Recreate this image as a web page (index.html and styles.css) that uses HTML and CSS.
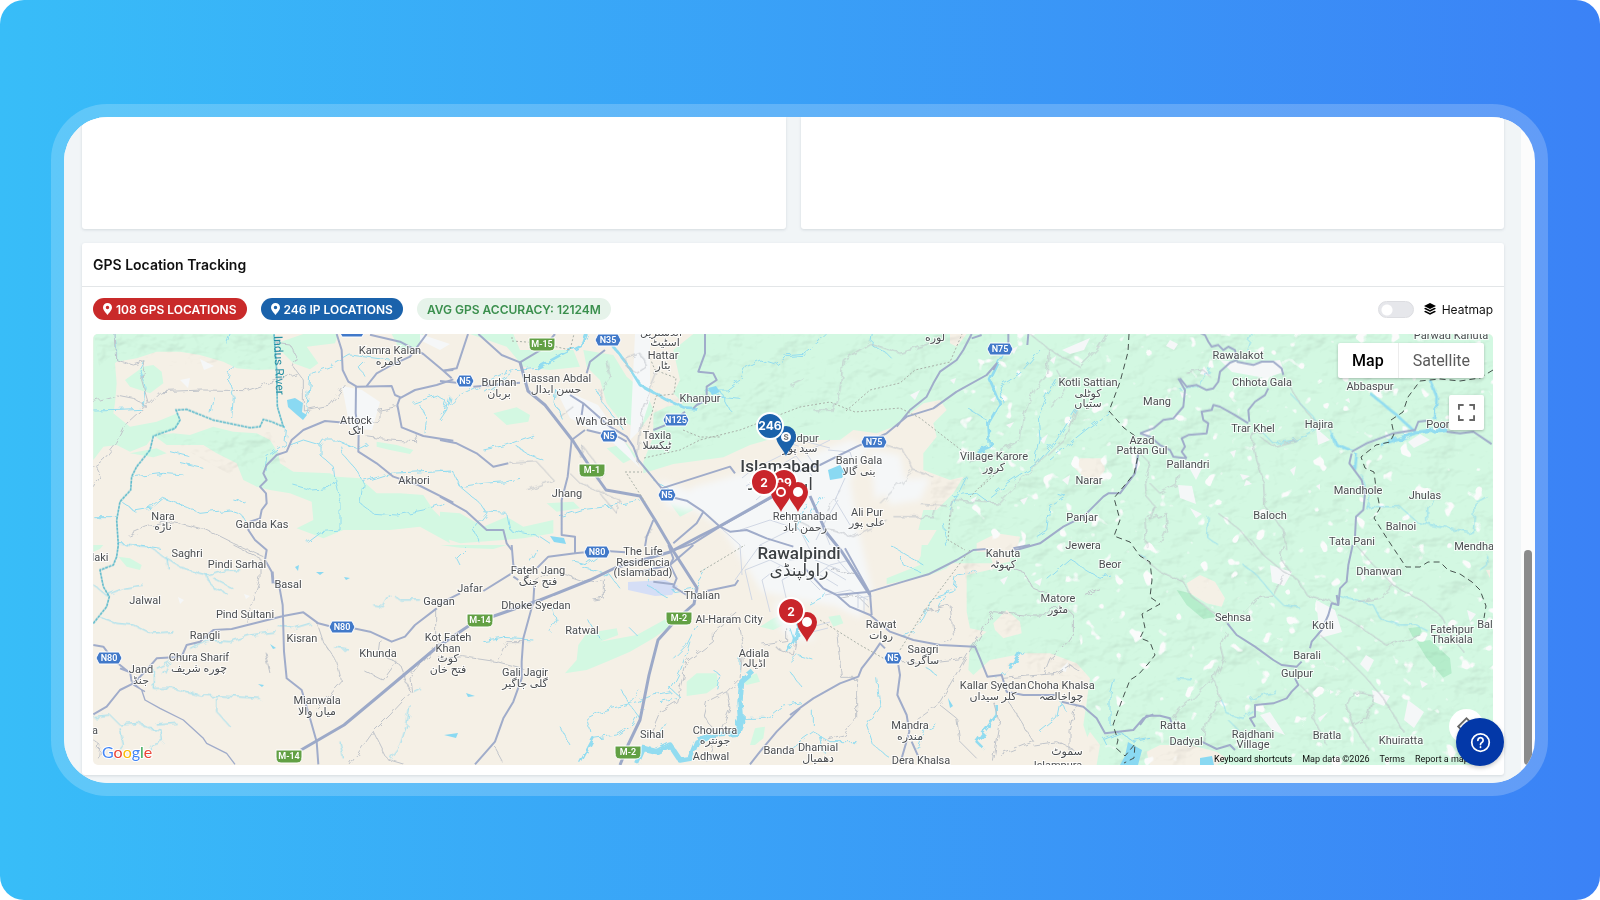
FILE: index.html
```html
<!DOCTYPE html>
<html lang="en">
<head>
    <meta charset="UTF-8">
    <meta name="viewport" content="width=device-width, initial-scale=1.0">
    <title>GPS Location Tracking</title>
    <link rel="stylesheet" href="styles.css">
</head>
<body>
    <div class="backdrop">
    <div class="frame">
    <div class="window">
        <main class="page">
            <div class="row">
                <div class="card"></div>
                <div class="card"></div>
            </div>
            <section class="card tracking">
                <h2>GPS Location Tracking</h2>
                <div class="toolbar">
                    <span class="badge red"><svg class="pinIcon" viewBox="0 0 12 16"><path d="M6 0a6 6 0 0 0-6 6c0 4 4 7 6 10 2-3 6-6 6-10a6 6 0 0 0-6-6zm0 8.300a2.300 2.300 0 1 1 0-4.600 2.300 2.300 0 0 1 0 4.600z"/></svg>108 GPS LOCATIONS</span>
                    <span class="badge blue"><svg class="pinIcon" viewBox="0 0 12 16"><path d="M6 0a6 6 0 0 0-6 6c0 4 4 7 6 10 2-3 6-6 6-10a6 6 0 0 0-6-6zm0 8.300a2.300 2.300 0 1 1 0-4.600 2.300 2.300 0 0 1 0 4.600z"/></svg>246 IP LOCATIONS</span>
                    <span class="badge green">AVG GPS ACCURACY: 12124M</span>
                    <label class="heatmap">
                        <input type="checkbox" class="switch">
                        <svg class="layers" viewBox="0 0 24 24"><path d="M12 0 0 6l12 6 12-6z"/><path d="M3 9.500 0 11.500l12 6 12-6-3-2-9 4.500z"/><path d="M3 15.500 0 17.500l12 6 12-6-3-2-9 4.500z"/></svg>
                        Heatmap
                    </label>
                </div>
                <div class="map">
                    <svg class="mapArt" viewBox="93 334 1400 431">
                        <defs>
                            <filter id="relief" x="0" y="0" width="100%" height="100%">
                                <feTurbulence type="fractalNoise" baseFrequency="0.025 0.035" numOctaves="4" seed="8"/>
                                <feDiffuseLighting surfaceScale="9" diffuseConstant="1.2" lighting-color="#ffffff" result="light">
                                    <feDistantLight azimuth="225" elevation="60"/>
                                </feDiffuseLighting>
                                <feComposite in="light" in2="SourceAlpha" operator="in"/>
                            </filter>
                            <filter id="specks" x="0" y="0" width="100%" height="100%">
                                <feTurbulence type="fractalNoise" baseFrequency="0.07" numOctaves="2" seed="12"/>
                                <feColorMatrix values="0 0 0 0 0.96  0 0 0 0 0.97  0 0 0 0 0.97  14 0 0 0 -9.500" result="dots"/>
                                <feComposite in="dots" in2="SourceAlpha" operator="in"/>
                            </filter>
                            <filter id="wiggle" x="-5%" y="-5%" width="110%" height="110%">
                                <feTurbulence type="fractalNoise" baseFrequency="0.12" numOctaves="2" seed="3"/>
                                <feDisplacementMap in="SourceGraphic" scale="7"/>
                            </filter>
                            <filter id="soft">
                                <feGaussianBlur stdDeviation="3"/>
                            </filter>
                            <g id="nShield"><path d="M-10-6H10L13 0 10 6H-10L-13 0z"/></g>
                            <g id="nShieldSmall"><path d="M-6-6H6L9 0 6 6H-6L-9 0z"/></g>
                            <g id="mShield"><path d="M-13-6H13V1Q13 7 8 7H-8Q-13 7-13 1z"/></g>
                            <path id="pin" d="M0 0C-2-6-10-12-10-20A10 10 0 0 1 10-20C10-12 2-6 0 0z"/>
                        </defs>

                        <!-- ground -->
                        <rect class="land" x="93" y="334" width="1400" height="431"/>
                        <g class="forest">
                            <svg class="tile" x="90" y="330" width="360" height="220" viewBox="0 0 1080 660">
                                <path d="M10 12H555L560 118 500 120 440 115 400 95 330 75 270 65 200 65 140 85 80 95 75 100 80 160 75 220 70 250 120 290 200 275 262 250 270 280 250 300 190 318 170 345 120 365 80 345 40 350 10 390z"/>
                                <path d="M105 150 160 110 190 105 215 125 220 160 180 190 120 170z"/>
                                <path d="M190 315 250 310 300 315 370 290 430 305 500 310 540 330 565 370 570 400 610 425 720 430 740 440 810 445 860 490 930 490 1000 495 1030 540 1060 570 1080 640 990 590 900 600 760 600 700 625 620 595 670 570 665 515 600 490 540 480 500 470 460 450 440 400 380 370 340 345 230 345z"/>
                                <path d="M560 40 640 12H745L735 40 650 50 685 100 660 118 610 100 570 60zM860 335 920 345 970 360 960 372 900 360 860 350zM905 12H1000L985 50 930 60zM120 370 200 355 230 370 190 382z"/>
                            </svg>
                            <svg class="tile" x="440" y="330" width="360" height="220" viewBox="0 0 1080 660">
                                <path d="M90 12H220L240 60 400 60 420 110 330 120 250 110 200 50zM160 250 230 232 270 255 265 275 200 285zM430 60 520 75 560 140 620 190 640 240 600 300 540 270 500 220 480 150 440 110zM0 545 60 550 130 590 200 560 250 590 340 570 340 610 250 625 60 640 0 620zM320 520 400 515 420 535 350 545z"/>
                                <path d="M610 430 610 395 640 320 640 250 680 230 730 220 700 190 720 150 700 60 760 12H1090V300L1000 325 930 345 850 382 700 402z"/>
                                <path d="M690 520 740 510 760 540 720 560zM500 355 560 340 590 380 550 400z"/>
                            </svg>
                            <svg class="tile" x="790" y="330" width="360" height="220" viewBox="0 0 1080 660">
                                <path d="M-20 12H1090V700H380L440 600 385 600 400 540 440 540 490 490 520 440 480 450 400 420 400 370 440 320 430 280 470 240 450 210 400 220 310 290 260 310 190 300 150 330-20 330z"/>
                                <path d="M30 450 90 440 110 480 70 500zM110 470 150 480 160 530 120 540z"/>
                            </svg>
                            <path d="M1130 334H1493V765H1130z"/>
                            <svg class="tile" x="90" y="545" width="360" height="225" viewBox="0 0 1080 675">
                                <path d="M85 35 120 40 155 60 150 75 110 65zM10 0H40L30 12 10 20z"/>
                            </svg>
                            <svg class="tile" x="440" y="545" width="360" height="225" viewBox="0 0 1080 675">
                                <path d="M0 0H200L160 12 60 8zM375 385 410 345 415 300 440 265 530 250 535 270 480 290 590 270 690 215 710 230 640 280 570 320 500 350 440 375zM740 410 770 385 830 385 835 420 800 445 740 453zM960 245 1000 220 1040 205 1050 230 1000 255zM930 600 945 550 975 545 970 580 945 600zM900 405 950 385 960 410 920 420z"/>
                            </svg>
                            <svg class="tile" x="790" y="545" width="360" height="225" viewBox="0 0 1080 675">
                                <path d="M395 0H560L520 20 470 70 420 90 290 118 290 100 390 60zM1060 0H620V70L530 90 530 200 540 250 590 260 540 300 535 375 550 390 600 345 700 325 780 325 860 355 900 400 890 470 880 540 900 600 880 660H1080zM115 215 150 210 160 235 130 245z"/>
                            </svg>
                        </g>
                        <g class="land">
                            <svg class="tile" x="790" y="330" width="360" height="220" viewBox="0 0 1080 660">
                                <path d="M850 410 870 385 940 385 945 420 920 460 880 440zM480 12H530L500 50 480 40zM560 640 620 610 690 620 680 665 560 665z"/>
                            </svg>
                            <svg class="tile" x="790" y="545" width="360" height="225" viewBox="0 0 1080 675">
                                <path d="M610 235 650 195 690 230 695 265 640 280 615 255zM590 0H670L660 50 610 60zM880 600 900 560 930 600 920 660H880z"/>
                            </svg>
                            <svg class="tile" x="1140" y="545" width="410" height="255" viewBox="0 0 1230 765">
                                <path d="M140 115 180 90 225 110 255 160 245 185 200 175 150 145zM20 620 60 600 150 600 230 620 260 640 230 660H30zM1038 75H1050V100z"/>
                            </svg>
                        </g>
                        <g class="park">
                            <svg class="tile" x="1140" y="545" width="410" height="255" viewBox="0 0 1230 765">
                                <path d="M110 135 150 145 200 190 230 215 190 222 140 180zM830 290 870 285 930 340 935 385 910 398 860 340zM805 250 840 245 850 275 820 280z"/>
                            </svg>
                        </g>
                        <g class="relief" filter="url(#relief)">
                            <path d="M94 334H280L270 372 220 362 140 368 100 372zM150 430 270 432 290 470 240 480z"/>
                            <path d="M645 460 655 410 720 334H1493V765H1090L1086 680 970 660 965 570 930 510 935 390 890 400 850 420 780 430z"/>
                        </g>
                        <path filter="url(#specks)" d="M960 334H1493V765H1100L1080 640 970 560 950 480z"/>
                        <g class="city" filter="url(#soft)">
                            <path d="M690 488 740 474 790 462 850 440 868 448 850 480 856 520 872 590 860 618 835 606 800 600 762 592 742 560 722 528 694 510z"/>
                            <path d="M776 600 800 610 815 640 790 640 775 620zM660 480 700 495 690 512 665 505zM880 480 930 478 920 500 890 505zM870 450 900 455 905 480 875 500z"/>
                        </g>
                        <g class="city">
                            <path d="M555 388 575 395 598 405 630 450 640 468 610 440 570 418zM635 334H650V400L640 430 630 440zM342 386 362 390 380 402 372 430 350 428zM420 334 450 344 440 350 420 340z"/>
                            <path d="M1220 360 1250 364 1280 360 1284 372 1265 378 1232 372zM1185 460 1202 468 1196 480zM1316 428 1330 440 1318 445zM1316 600 1335 610 1342 632 1320 638zM1270 565 1292 572 1284 586 1272 582zM1260 715 1270 712 1285 735 1272 730z"/>
                            <path d="M1178 485 1192 486 1196 504 1180 498zM1190 508 1202 514 1196 518zM1366 655 1374 660 1368 672 1360 664zM1372 690 1390 696 1384 706 1374 702zM1408 700 1424 712 1414 728 1404 720zM1467 610 1476 614 1470 622zM1420 434 1430 440 1414 448 1408 442zM1290 470 1296 466 1294 476z"/>
                            <path d="M1170 340 1178 344 1174 350 1166 346zM1204 366 1210 376 1200 374zM1180 392 1188 394 1182 398zM1230 452 1236 450 1234 458zM1246 480 1252 484 1244 486zM1316 486 1320 484 1320 490zM1156 448 1160 446 1160 452zM1345 400 1349 398 1350 403zM1240 474 1250 476 1243 480zM1318 718 1328 712 1320 722zM1390 570 1397 576 1390 578zM1360 572 1366 578 1362 582zM1420 680 1428 684 1422 688zM1452 724 1460 728 1455 736zM1330 690 1334 692 1330 694z"/>
                            <path d="M1010 350 1018 346 1014 354zM1050 360 1056 356 1054 364zM990 400 996 396 994 402zM1006 425 1014 422 1010 428zM950 380 956 378 954 384zM910 395 920 390 915 400zM1040 440 1048 434 1044 444zM970 500 977 496 974 503zM1020 500 1028 497 1024 505zM1062 350 1090 338 1084 350 1070 354zM1062 480 1070 475 1068 485zM1000 580 1008 576 1004 585zM1034 582 1042 578 1040 586zM1060 670 1068 662 1066 672zM200 359 214 366 204 370zM180 380 190 378 188 388zM178 597 184 600 180 604zM244 594 250 596 246 599z"/>
                        </g>
                        <path class="airport" d="M628 582 665 580 678 586 672 595 655 596 628 590z"/>

                        <!-- water -->
                        <g class="stream" filter="url(#wiggle)">
                            <svg class="tile" x="90" y="330" width="360" height="220" viewBox="0 0 1080 660">
                                <path d="M75 12 80 60 80 90M165 95 150 120 165 170 160 230M10 240 90 238 150 235M420 12 410 40M430 110 415 150 430 200 425 265M370 200 360 250M660 130 650 240 640 260M665 130 720 110 780 75 900 90M820 95 805 110 825 140M130 440 180 435 220 430 280 435M240 365 300 380M270 400 340 415M600 345 640 330 690 345 700 330 740 330 800 355 830 340M690 345 690 375 730 410 735 450 720 475 665 480 610 465M735 450 750 520 750 600 690 605 650 635M755 350 760 375 800 420 820 455 900 430 1000 425 1080 420M820 455 810 520 850 550 920 555 1000 540 1060 520M100 520 130 540 190 530 220 505 290 530 330 550 420 540 450 550 480 590M430 510 470 520M10 560 80 560M80 640 150 645 210 655M590 290 585 340 530 380 525 420M990 225 1010 260 1005 310M970 220 1040 195 1070 215 1060 250"/>
                            </svg>
                            <svg class="tile" x="440" y="330" width="360" height="220" viewBox="0 0 1080 660">
                                <path d="M0 250 50 200 110 170 200 125 290 115 370 70 430 40 440 12M0 270 20 240 30 200M0 420 40 425 60 470 120 520 140 550 100 600 120 640M60 470 130 460 200 455 240 445M130 360 200 345 280 315M230 350 270 375 310 390M350 180 345 220 370 270M470 180 490 220 550 300M130 545 200 550 210 600 300 620 330 640M360 560 420 540 500 530 600 510M690 480 640 450M800 180 850 200 900 205M840 180 870 240M220 130 130 190"/>
                                <path class="wide" d="M520 50 560 100 600 165 680 210 730 232 770 235"/>
                                <path class="wide" d="M290 115 370 70 430 40 440 12"/>
                                <path d="M790 180 860 180 900 150 920 110 960 90 1010 105 1040 80 1100 75"/>
                            </svg>
                            <svg class="tile" x="90" y="545" width="360" height="225" viewBox="0 0 1080 675">
                                <path d="M105 0 180 5 220 35 290 75 350 90 400 75 450 75M350 90 370 130 410 145M370 100 430 130M230 35 235 70M50 150 100 130 160 120M30 215 80 235 130 240 180 265 250 260M10 120 50 150M300 310 350 285 420 290 480 270 560 260M190 370 190 430 250 430 330 450 430 455 510 460M200 370 240 350 220 390M380 455 380 500 420 545M10 515 60 510 90 540 150 535 180 550 215 555 220 590 190 600 170 640M90 550 100 600 70 640M200 540 260 535M560 240 610 250 660 235M730 305 775 312M850 180 880 185 900 150M910 150 930 165 990 165M960 480 950 540 930 600 900 640M750 590 760 640M970 440 990 430"/>
                            </svg>
                            <svg class="tile" x="440" y="545" width="360" height="225" viewBox="0 0 1080 675">
                                <path d="M80 10 50 40 60 60M290 12 270 50M400 50 440 60 480 30M430 70 510 90 540 130M640 60 620 120 680 155M800 70 760 130 700 140M130 290 190 280 280 285M340 190 350 230 330 260M440 220 480 280M590 270 570 250M750 290 720 380 690 440 640 450 590 470 480 500 440 520 450 560M540 430 570 480 600 520M570 470 600 440M660 470 720 455 690 430M360 545 390 600M420 655 460 580 530 570 580 540 610 490M770 240 740 300 700 340M900 340 900 380M820 375 840 390 830 430M910 520 980 520 1030 480 1080 470M1050 380 1080 420M660 570 680 530"/>
                                <path class="river" d="M940 380 905 410 900 470 905 530 890 565 830 570 770 590 750 640 720 645 690 600 650 620 610 610 590 655"/>
                                <path class="wide" d="M420 655 460 580 450 600M1070 250 1060 290 1040 320"/>
                            </svg>
                            <svg class="tile" x="790" y="330" width="360" height="220" viewBox="0 0 1080 660">
                                <path d="M-20 75 40 70 80 40 110 12M250 12 245 45 290 70 305 85M750 60 690 130 630 170 640 220M540 240 590 270M800 150 770 200 745 260 750 330 735 400M960 245 900 290 850 330 780 390M800 490 830 500 780 530 770 600 740 620M860 235 800 330 740 400 650 460 600 500M460 580 470 650M50 520 20 590 60 640M530 440 480 540M100 500 60 560"/>
                                <path class="wide" d="M650 50 600 150 630 220 595 280 600 350 560 365"/>
                                <path d="M490 500 560 490 600 520"/>
                            </svg>
                            <svg class="tile" x="1140" y="330" width="370" height="220" viewBox="0 0 1110 660">
                                <path d="M450 190 520 260 540 290M570 300 590 345 640 360M360 300 400 340 470 330 530 295M680 530 780 530 830 575 950 600 1000 610 1005 520 1040 500M860 580 860 530 900 500M205 560 200 620 240 650M120 180 180 170 210 110M340 0 320 60M660 430 690 500 680 540"/>
                                <path class="wide" d="M690 190 770 255 830 310 720 345M870 150 890 200 885 270M575 310 585 340 630 360M650 370 645 420"/>
                                <path class="river" d="M760 335 840 305 920 295"/>
                            </svg>
                            <svg class="tile" x="790" y="545" width="360" height="225" viewBox="0 0 1080 675">
                                <path d="M560 80 500 90 490 140 430 160 400 220 370 260 330 270M480 130 440 200M770 100 840 40 880 70 930 100 960 90M0 350 20 330 70 345M10 280 0 250M230 540 270 480 260 400M230 540 250 600 300 640M0 610 70 560 120 590 200 590M70 540 70 500M90 570 100 620M380 610 400 560 440 540M700 320 650 380 620 400M330 30 340 60 390 80M830 500 810 470 800 520 750 560M410 370 440 390M960 540 960 440 970 400M300 0 400 60M60 180 100 160 110 130"/>
                                <path class="wide" d="M620 480 620 510 560 590 580 610M690 320 660 370M10 210 25 250 15 290"/>
                                <path d="M1080 580 1030 590 990 560 940 580 950 600"/>
                            </svg>
                            <svg class="tile" x="1140" y="545" width="410" height="255" viewBox="0 0 1230 765">
                                <path d="M590 150 650 165 700 180 720 220 780 240 830 240 860 255M310 60 350 90 400 150 430 180 480 190M330 465 370 450 410 440M240 460 265 510 310 520 340 500M1040 30 1040 60 1020 75M0 30 20 40M110 400 160 405M270 530 300 560"/>
                            </svg>
                        </g>
                        <g class="lake">
                            <path d="M287 400 295 398 303 403 302 412 307 415 303 420 297 415 288 407zM828 470 840 465 845 472 842 478 830 480zM550 536 564 538 566 544 554 542zM708 388 716 386 720 392 712 395zM295 567 299 565 298 571zM316 572 324 572 320 575zM344 577 350 578 346 580zM444 735 458 733 456 738zM466 693 475 696 468 697zM1128 742 1142 750 1138 765H1120L1125 756zM1200 758 1212 756 1214 765H1200zM948 698 953 706 950 708zM258 684 264 685 262 687zM270 644 276 648 273 649z"/>
                        </g>
                        <g class="indus">
                            <svg class="tile" x="90" y="330" width="360" height="220" viewBox="0 0 1080 660">
                                <path d="M552 12 560 120 562 230 580 290 545 275 520 268 510 290 480 293 370 270 290 238 258 240 270 270 255 295 190 318 180 360 140 410 125 440 122 480 90 515 80 570 85 645 80 680 70 705 30 720 40 770 58 800 50 830 10 880"/>
                            </svg>
                        </g>

                        <!-- small roads -->
                        <g class="road" filter="url(#wiggle)">
                            <svg class="tile" x="90" y="330" width="360" height="220" viewBox="0 0 1080 660">
                                <path d="M75 12 80 90 130 105 165 95 155 150 175 220 110 280 80 340 40 390 10 410M10 215 80 195 130 205 170 230M175 220 210 185 340 180 470 182 560 150 620 130M560 40 600 45 620 80 610 110 640 150 640 240 720 225 770 160M115 615 170 590 250 575 350 600 430 640 520 680M830 320 900 330 980 335 975 310M800 280 870 270 870 240 920 230M10 470 30 430 20 410"/>
                            </svg>
                            <svg class="tile" x="440" y="330" width="360" height="220" viewBox="0 0 1080 660">
                                <path d="M650 130 610 230 590 400M420 380 430 350 490 430 470 450M210 400 290 395 340 450 260 480M390 430 420 460 540 510 530 550 480 490M550 90 600 70 620 110 590 130 560 110 560 90M500 90 510 140 480 180 490 220M400 230 360 260M420 380 400 330M640 600 610 620"/>
                            </svg>
                            <svg class="tile" x="90" y="545" width="360" height="225" viewBox="0 0 1080 675">
                                <path d="M430 0 510 40 510 100 480 190 470 230M680 230 700 290 740 350 755 410 720 450 680 490M1040 190 1040 300 960 400 965 440 900 510 850 560 800 630 780 660M870 280 865 320 930 360 960 440M820 375 880 405 920 350M850 560 890 640 940 655M525 320 540 385M10 585 30 600 25 640"/>
                            </svg>
                            <svg class="tile" x="440" y="545" width="360" height="225" viewBox="0 0 1080 675">
                                <path d="M280 110 350 80 440 110 490 100 490 160 460 165M0 340 70 335 170 350 200 290 250 290M890 200 820 260 820 290 740 350 710 470 660 500 630 570M900 250 910 300 900 400 860 440 800 470 790 510 830 570 800 650M860 440 870 490 840 560M970 300 1040 290 1040 250M160 600 190 655M170 350 250 370M1010 310 1060 330 1070 280"/>
                            </svg>
                            <svg class="tile" x="790" y="330" width="360" height="220" viewBox="0 0 1080 660">
                                <path d="M0 165 40 145M240 40 160 90 150 180 130 240 70 240M240 40 330 70 420 40M720 12 780 60 770 130 730 180 700 260 690 330 620 370 540 400M780 60 870 110 920 60 950 12M800 120 830 170 780 230M860 240 830 320 730 410 630 520 560 515 490 510 480 560M280 340 340 360 370 420 430 440M370 420 330 460 270 520M390 520 470 525M310 560 430 560 440 530M150 480 110 540M0 560 60 590 130 600 190 620M190 620 290 570"/>
                            </svg>
                            <svg class="tile" x="1140" y="330" width="370" height="220" viewBox="0 0 1110 660">
                                <path d="M450 170 480 220 520 270 550 290M400 300 335 310 350 390 370 450 375 530 430 600 440 660M115 430 110 460 60 490 30 460M0 370 30 400 15 450 20 500 45 530 30 570 80 550 80 600 60 640M45 530 15 570 20 650M235 550 300 600 340 650M470 330 400 350 360 320M140 130 190 120 210 140"/>
                            </svg>
                            <svg class="tile" x="790" y="545" width="360" height="225" viewBox="0 0 1080 675">
                                <path d="M140 260 155 400 200 400 200 520 160 570 100 585M520 350 450 470 380 520M520 350 610 200 700 210 760 210 780 190 830 190 850 210 850 270 830 300 780 340 760 390M640 60 700 80 730 130 780 150M330 350 430 350 520 340M450 480 500 520 510 590 560 640M610 470 630 540 610 650M640 400 800 385 840 360 870 380M650 460 730 590 630 630M860 480 840 560 840 620M730 600 800 590 860 620M400 200 480 180 490 270 460 300M880 150 930 130M120 70 200 90 230 130M150 160 200 150 240 190"/>
                            </svg>
                            <svg class="tile" x="1140" y="545" width="410" height="255" viewBox="0 0 1230 765">
                                <path d="M330 -20 370 30 430 80 470 100 500 150 590 175M430 90 400 150 350 160 310 200M640 -10 700 60 760 120 720 160 650 170M760 120 850 170 900 210 920 240M590 205 650 240 740 300 800 285 840 270M540 270 620 340 680 400 730 460 790 560M480 420 520 460 520 520 560 600M260 260 240 300 250 340 220 400 160 460 120 490 100 520M220 400 240 460 200 530 190 590M640 440 700 450 680 520 640 540 620 480 640 440M640 540 690 620M430 0 420 40 450 80M0 30 60 80 130 110 150 150 230 210 270 240M920 250 970 320"/>
                            </svg>
                        </g>
                        <g class="street">
                            <path d="M742 478 752 470 796 448M746 486 796 456M756 500 790 470M780 440 810 450 830 440M800 440 830 448M796 456 812 476M804 450 818 470M735 580 760 545 790 530M752 600 745 570 770 560 800 575M770 612 762 580 780 566M788 606 782 580 800 570 820 590M760 545 790 560 830 556M800 530 815 560 840 570M820 520 830 545M810 580 830 565 850 560M825 595 850 590 868 600M858 595 858 608M864 597 864 612M872 596 858 598M740 530 770 520 800 530M712 520 740 545 742 575M828 450 850 452 856 470M845 478 835 500 850 525M838 500 826 520 816 540M826 568 846 580M836 558 850 574M820 575 838 586M815 626 830 622M812 632 828 628"/>
                        </g>

                        <!-- main roads -->
                        <g class="highway">
                            <svg class="tile" x="90" y="330" width="360" height="220" viewBox="0 0 1080 660">
                                <path d="M740 12 755 60 758 120 775 155 800 170 905 168 915 195 933 203 975 180 1040 165 1090 148M1010 12 960 80 905 105 860 130 830 168M840 14 930 35 1000 72 1060 122 1090 120M1060 122 1085 145M798 170 797 250 806 310 805 365 860 400 910 440 985 465 1090 518M930 203 922 225 935 292 1000 318 1090 332M765 278 705 273 640 300 605 330 590 365 560 375 530 405 520 430 530 450 510 470 528 490 530 520 515 540 510 565 480 575 475 600 495 630 530 660 525 690 545 725 548 760"/>
                            </svg>
                            <svg class="tile" x="440" y="330" width="360" height="220" viewBox="0 0 1080 660">
                                <path d="M84 12 50 115 10 122M115 12 185 75 240 97 310 55M0 153 50 158M100 170 240 158M495 60 450 95 440 130M345 12 330 30M390 195 430 220 510 290 560 320 580 350 595 390 665 475M430 220 425 255M435 300 395 330 383 440 365 510 365 615 405 620 405 660M440 300 490 312M530 318 560 335M665 475 870 410 885 430M690 500 740 512 790 545 840 590 870 605 920 600 980 625 1060 650M790 545 770 580 700 640M1000 500 840 590 760 640 690 665M640 570 620 620 615 650M795 12 795 70 775 125 820 130 830 150 800 170 800 210 770 225 760 235M735 245 690 280 640 300M0 330 50 340 110 370 160 410 205 400M0 500 80 545 140 600 190 600 200 640 215 660"/>
                            </svg>
                            <svg class="tile" x="90" y="545" width="360" height="225" viewBox="0 0 1080 675">
                                <path d="M548 80 550 110 568 125 578 180 582 320 590 400 635 435 660 520 680 590 685 658M1040 190 975 240 945 275 905 290 840 260 790 250M725 245 685 235 640 202 580 213 425 252 370 255 330 290 290 300 275 335 200 340 170 375 130 415 90 435 50 485 10 508M90 370 115 380 90 360 70 345 40 305 10 300M120 380 125 410"/>
                                <path class="thin" d="M125 410 155 435 165 465 210 490 280 525 340 580 350 595 410 625 435 658M130 420 165 440"/>
                            </svg>
                            <svg class="tile" x="440" y="545" width="360" height="225" viewBox="0 0 1080 675">
                                <path d="M405 0 405 25 325 35 290 70M405 25 450 20M500 18 555 22M215 85 130 138M0 175 60 145M220 95 235 105M215 0 220 60 240 80M283 120 280 170 250 280 245 350 245 400 220 470 190 520 165 590 105 658M685 0 700 40 690 60 710 100 700 125 740 150M690 60 600 80M690 60 760 0M640 110 700 118M930 658 960 620 1010 560 1080 490M800 138 885 120 895 105"/>
                            </svg>
                            <svg class="tile" x="790" y="330" width="360" height="220" viewBox="0 0 1080 660">
                                <path d="M0 430 90 405 200 350 290 310 350 260 430 235 500 185 590 135 620 100 610 120M545 12 520 60 500 90 450 125 430 160 410 200 360 240 320 290M575 15 545 25M660 665 750 640 820 590 880 560 940 500 955 490 990 490 1035 430 1045 370M655 12V40M715 12 712 45"/>
                            </svg>
                            <svg class="tile" x="790" y="545" width="360" height="225" viewBox="0 0 1080 675">
                                <path d="M45 70 100 130 140 150 240 140 340 110 415 88 500 45 550 15 590 12M140 150 180 185 240 210 300 260 370 285 450 300 555 305 570 340 592 395 635 390 650 440 700 450 800 450M0 510 70 460 150 415 205 395 215 370 250 325 270 295 285 310M165 10 240 145 245 210M325 360 330 390 322 450 350 510 358 560 335 640M365 590 385 635M815 470 880 485 920 520 945 565 1030 555 1060 520 1090 508M670 10 720 0"/>
                            </svg>
                            <svg class="tile" x="1140" y="330" width="370" height="220" viewBox="0 0 1110 660">
                                <path d="M175 5 195 15 205 35 215 50 235 45 250 60 265 50 285 60 290 90 270 98 240 125 235 155 220 175 200 180 170 165 140 170 120 145M115 145 135 180 130 230 100 265 70 270 40 295 0 310M290 95 340 105 365 95 400 95 425 115 430 135M385 175 375 195 345 215 325 240 328 275M325 280 285 255 240 230 220 225 215 240 185 245 190 270 205 280 200 310 145 315 125 325 135 350 125 365 140 385M0 310 30 320 60 345 90 360 100 380 140 385M635 365 680 340 760 310 825 300 835 275 860 272M635 370 628 400 665 450 675 490 670 540 648 560 645 620M920 305 960 310 1000 305 1055 342"/>
                            </svg>
                            <svg class="tile" x="1140" y="545" width="410" height="255" viewBox="0 0 1230 765">
                                <path d="M638 0 625 60 620 110 600 130 595 180 575 175 565 210 545 255 515 290 510 310M595 180 590 150M485 350 470 365 425 360 400 345 345 305 290 270 262 235M465 400 475 420 455 440 440 460 400 475 345 480 345 515 330 520 345 545M185 590 230 612 270 600 285 615M0 540 20 512 60 512 90 520 100 550"/>
                            </svg>
                        </g>
                        <g class="motorway">
                            <path d="M520 362 528 391 545 405 573 441 594 473 606 490 640 496 655 520 672 549 697 588 694 604 676 620 658 640 649 675 644 700 640 720 628 745 620 765"/>
                            <path d="M301 750 344 725 380 695 436 648 470 625 494 616 540 600 590 580 615 568 670 552 700 536 720 526 773 496"/>
                            <path d="M810 496 826 532 842 552 870 595"/>
                        </g>
                        <g class="trail">
                            <path d="M512 337V341L540 343 570 350 574 334M650 358 655 370 676 378 674 394 656 396 648 430M683 430 700 437 720 437M644 458 680 450 700 440 740 430 800 407 830 402 855 412 900 408 920 418 965 453M846 411 870 390 900 383 915 370 950 362 962 334M625 472 642 472M627 474 645 502M1010 456 970 497M700 572 745 545M1000 470 980 488M950 515 948 540 965 550M970 550 925 610 900 650M820 620 860 645 890 662"/>
                        </g>
                        <g class="border">
                            <path d="M1129 334 1128 352 1120 382 1109 411 1124 428 1138 438 1138 456 1134 474 1114 498 1120 520 1114 536 1130 542 1140 556 1150 562 1152 580 1150 597 1160 604 1142 614 1145 628 1140 638 1150 642 1155 655 1148 664 1138 675 1130 680 1122 700 1113 725 1118 740 1116 748 1125 756 1135 744 1134 758 1124 763"/>
                            <path d="M1493 370 1480 378 1460 381 1440 379 1420 381 1408 397 1403 412 1391 420 1394 434 1390 442 1376 445 1361 457 1365 468 1374 472 1376 488 1380 508 1374 518 1388 540 1400 558 1406 567 1420 567 1428 562 1440 562 1448 570 1460 574 1472 582 1480 590 1486 606 1484 618"/>
                        </g>

                        <!-- road shields -->
                        <g class="shield blueShield">
                            <use href="#nShield" x="352" y="331"/><use href="#nShield" x="608" y="340"/><use href="#nShieldSmall" x="465" y="381"/><use href="#nShield" x="676" y="420"/><use href="#nShieldSmall" x="609" y="436"/><use href="#nShieldSmall" x="667" y="495"/><use href="#nShield" x="109" y="658"/><use href="#nShield" x="342" y="627"/><use href="#nShield" x="597" y="552"/><use href="#nShield" x="1000" y="349"/><use href="#nShield" x="874" y="442"/><use href="#nShieldSmall" x="893" y="658"/>
                        </g>
                        <g class="shield greenShield">
                            <use href="#mShield" x="542" y="344"/><use href="#mShield" x="592" y="470"/><use href="#mShield" x="289" y="756"/><use href="#mShield" x="480" y="620"/><use href="#mShield" x="679" y="618"/><use href="#mShield" x="628" y="752"/>
                        </g>
                        <g class="shieldText">
                            <text x="608" y="343">N35</text><text x="465" y="384">N5</text><text x="676" y="423">N125</text><text x="609" y="439">N5</text><text x="667" y="498">N5</text><text x="109" y="661">N80</text><text x="342" y="630">N80</text><text x="597" y="555">N80</text><text x="1000" y="352">N75</text><text x="874" y="445">N75</text><text x="893" y="661">N5</text>
                            <text x="542" y="347">M-15</text><text x="592" y="473">M-1</text><text x="289" y="759">M-14</text><text x="480" y="623">M-14</text><text x="679" y="621">M-2</text><text x="628" y="755">M-2</text>
                        </g>

                        <!-- places -->
                        <text class="riverName" transform="translate(274 336) rotate(88)">Indus River</text>
                        <g class="places">
                            <text x="390" y="354">Kamra Kalan</text><text x="389" y="365">كامره</text>
                            <text x="356" y="424">Attock</text><text x="356" y="434">اٹک</text>
                            <text x="414" y="484">Akhori</text>
                            <text x="163" y="520">Nara</text><text x="163" y="530">ناڑه</text>
                            <text x="262" y="528">Ganda Kas</text>
                            <text x="499" y="386">Burhan</text><text x="499" y="397">بربان</text>
                            <text x="557" y="382">Hassan Abdal</text><text x="556" y="393">حسن ابدال</text>
                            <text x="661" y="336">انڈسٹریل</text><text x="665" y="346">اسٹیٹ</text>
                            <text x="663" y="359">Hattar</text><text x="663" y="369">بٹار</text>
                            <text x="700" y="402">Khanpur</text>
                            <text x="601" y="425">Wah Cantt</text>
                            <text x="657" y="439">Taxila</text><text x="657" y="449">ٹیکسلا</text>
                            <text x="567" y="497">Jhang</text>
                            <text x="100" y="561">laki</text><text x="95" y="734">a</text>
                            <text x="187" y="557">Saghri</text>
                            <text x="237" y="568">Pindi Sarhal</text>
                            <text x="288" y="588">Basal</text>
                            <text x="145" y="604">Jalwal</text>
                            <text x="245" y="618">Pind Sultani</text>
                            <text x="205" y="639">Rangli</text>
                            <text x="302" y="642">Kisran</text>
                            <text x="378" y="657">Khunda</text>
                            <text x="199" y="661">Chura Sharif</text><text x="199" y="672">چوره شریف</text>
                            <text x="141" y="673">Jand</text><text x="141" y="684">جنڈ</text>
                            <text x="317" y="704">Mianwala</text><text x="317" y="715">میاں والا</text>
                            <text x="439" y="605">Gagan</text>
                            <text x="448" y="641">Kot Fateh</text><text x="448" y="652">Khan</text><text x="448" y="662">کوٹ</text><text x="448" y="673">فتح خان</text>
                            <text x="643" y="555">The Life</text><text x="643" y="566">Residencia</text><text x="643" y="576">(Islamabad)</text>
                            <text x="538" y="574">Fateh Jang</text><text x="538" y="585">فتح جنگ</text>
                            <text x="470" y="592">Jafar</text>
                            <text x="536" y="609">Dhoke Syedan</text>
                            <text x="582" y="634">Ratwal</text>
                            <text x="525" y="676">Gali Jagir</text><text x="525" y="687">گلی جاگیر</text>
                            <text x="702" y="599">Thalian</text>
                            <text x="729" y="623">Al-Haram City</text>
                            <text x="754" y="657">Adiala</text><text x="754" y="667">اڈیالہ</text>
                            <text x="652" y="738">Sihal</text>
                            <text x="715" y="734">Chountra</text><text x="715" y="744">جونتره</text>
                            <text x="711" y="760">Adhwal</text>
                            <text x="779" y="754">Banda</text>
                            <text x="818" y="751">Dhamial</text><text x="818" y="762">دهمیال</text>
                            <text x="935" y="341">لوره</text>
                            <text x="1088" y="386">Kotli Sattian</text><text x="1088" y="397">کوٹلی</text><text x="1088" y="407">ستیاں</text>
                            <text x="800" y="442">Saidpur</text><text x="800" y="452">سید پور</text>
                            <text x="859" y="464">Bani Gala</text><text x="859" y="475">بنی گالا</text>
                            <text x="994" y="460">Village Karore</text><text x="994" y="471">کرور</text>
                            <text x="1089" y="484">Narar</text>
                            <text x="1082" y="521">Panjar</text>
                            <text x="1083" y="549">Jewera</text>
                            <text x="867" y="516">Ali Pur</text><text x="867" y="526">علی پور</text>
                            <text x="805" y="520">Rehmanabad</text><text x="805" y="531">رحمن آباد</text>
                            <text x="1142" y="444">Azad</text><text x="1142" y="454">Pattan Gul</text>
                            <text x="1451" y="339">Parwad Kahuta</text>
                            <text x="1238" y="359">Rawalakot</text>
                            <text x="1262" y="386">Chhota Gala</text>
                            <text x="1370" y="390">Abbaspur</text>
                            <text x="1157" y="405">Mang</text>
                            <text x="1253" y="432">Trar Khel</text>
                            <text x="1319" y="428">Hajira</text>
                            <text x="1445" y="428">Poonch</text>
                            <text x="1188" y="468">Pallandri</text>
                            <text x="1358" y="494">Mandhole</text>
                            <text x="1425" y="499">Jhulas</text>
                            <text x="1270" y="519">Baloch</text>
                            <text x="1401" y="530">Balnoi</text>
                            <text x="1352" y="545">Tata Pani</text>
                            <text x="1476" y="550">Mendhar</text>
                            <text x="1003" y="557">Kahuta</text><text x="1003" y="568">کہوٹہ</text>
                            <text x="1110" y="568">Beor</text>
                            <text x="1058" y="602">Matore</text><text x="1058" y="613">مٹور</text>
                            <text x="881" y="628">Rawat</text><text x="881" y="639">روات</text>
                            <text x="923" y="653">Saagri</text><text x="923" y="664">ساگری</text>
                            <text x="993" y="689">Kallar Syedan</text><text x="993" y="700">کلر سیداں</text>
                            <text x="1061" y="689">Choha Khalsa</text><text x="1061" y="700">چواخالصہ</text>
                            <text x="910" y="729">Mandra</text><text x="910" y="740">مندره</text>
                            <text x="921" y="764">Dera Khalsa</text>
                            <text x="1067" y="755">سموٹ</text><text x="1058" y="769">Islampura</text>
                            <text x="1379" y="575">Dhanwan</text>
                            <text x="1233" y="621">Sehnsa</text>
                            <text x="1323" y="629">Kotli</text>
                            <text x="1452" y="633">Fatehpur</text><text x="1452" y="643">Thakiala</text>
                            <text x="1488" y="628">Bala</text>
                            <text x="1307" y="659">Barali</text>
                            <text x="1297" y="677">Gulpur</text>
                            <text x="1173" y="729">Ratta</text>
                            <text x="1186" y="745">Dadyal</text>
                            <text x="1253" y="738">Rajdhani</text><text x="1253" y="748">Village</text>
                            <text x="1327" y="739">Bratla</text>
                            <text x="1401" y="744">Khuiratta</text>
                        </g>
                        <g class="places major">
                            <text x="780" y="472">Islamabad</text><text x="780" y="490">اسلام آباد</text>
                            <text x="799" y="559">Rawalpindi</text><text x="799" y="576">راولپنڈی</text>
                        </g>

                        <!-- clusters and markers -->
                        <g class="marker redMarker">
                            <circle class="cluster" cx="784" cy="482" r="13"/><text x="784" y="487">99</text>
                            <use href="#pin" x="798" y="512"/><circle class="dot" cx="798" cy="492" r="5"/>
                            <use href="#pin" x="781" y="512"/><circle class="ring" cx="781" cy="492" r="4"/>
                            <circle class="cluster" cx="764" cy="482" r="13"/><text x="764" y="487">2</text>
                            <use href="#pin" x="807" y="642"/><circle class="dot" cx="807" cy="622" r="5"/>
                            <circle class="cluster" cx="791" cy="611" r="13"/><text x="791" y="616">2</text>
                        </g>
                        <g class="marker blueMarker">
                            <use href="#pin" x="786" y="456"/><circle class="dot" cx="786" cy="437" r="5"/><text class="pinLetter" x="786" y="440">S</text>
                            <circle class="cluster" cx="770" cy="426" r="13"/><text x="770" y="430">246</text>
                        </g>
                    </svg>

                    <div class="controls">
                        <div class="mapType">
                            <button class="active">Map</button>
                            <button>Satellite</button>
                        </div>
                        <button class="fullscreen" aria-label="Toggle fullscreen view">
                            <svg viewBox="0 0 18 18"><path d="M0 0v6h2V2h4V0zM12 0v2h4v4h2V0zM2 12H0v6h6v-2H2zM16 16h-4v2h6v-6h-2z"/></svg>
                        </button>
                    </div>
                    <a href="#" class="google" aria-label="Google"><span class="gBlue">G</span><span class="gRed">o</span><span class="gYellow">o</span><span class="gBlue">g</span><span class="gGreen">l</span><span class="gRed">e</span></a>
                    <button class="camera" aria-label="Map camera controls">
                        <svg viewBox="0 0 24 24"><path d="M12 1 6.500 6.500 8 8l4-4 4 4 1.500-1.500zM1 12l5.500 5.500L8 16l-4-4 4-4-1.500-1.500zM23 12l-5.500-5.500L16 8l4 4-4 4 1.500 1.500zM12 23l5.500-5.500L16 16l-4 4-4-4-1.500 1.500z"/></svg>
                    </button>
                    <div class="credits">
                        <button>Keyboard shortcuts</button>
                        <span>Map data ©2026</span>
                        <a href="#">Terms</a>
                        <a href="#">Report a map error</a>
                    </div>
                </div>
            </section>
        </main>
        <div class="scrollbar"><div class="thumb"></div></div>
        <button class="help" aria-label="Help">
            <svg viewBox="0 0 24 24"><circle cx="12" cy="12" r="10"/><path d="M9 9.500a3 3 0 1 1 4.500 2.600c-1 .6-1.500 1.100-1.500 2.200"/><path d="M12 17v.5"/></svg>
        </button>
    </div>
    </div>
    </div>
</body>
</html>
```

FILE: styles.css
```css
*{
    box-sizing: border-box;
}
body{
    margin: 0;
    background-color: #fff;
    font-family: Inter, "Liberation Sans", sans-serif;
    color: #111;
}
button{
    border: none;
    padding: 0;
    font: inherit;
    cursor: pointer;
}
.backdrop{
    min-height: 100vh;
    display: flex;
    align-items: center;
    padding: 51px 52px 51px 51px;
    border-radius: 24px;
    background: linear-gradient(90deg, #38bdf8, #3b82f6);
}
.frame{
    flex: 1;
    padding: 13px;
    border-radius: 56px;
    background-color: rgba(255, 255, 255, 0.2);
}
.window{
    position: relative;
    display: flex;
    overflow: hidden;
    border-radius: 44px;
    background-color: #fcfcfc;
}
.page{
    flex: 1;
    display: flex;
    flex-direction: column;
    gap: 14px;
    padding: 0 17px 8px 18px;
    background-color: #f1f5f7;
}
.row{
    display: flex;
    gap: 15px;
}
.card{
    flex: 1;
    background-color: #fff;
    border-radius: 3px;
    box-shadow: 0 1px 3px rgba(60, 80, 100, 0.16);
}
.row .card{
    min-height: 112px;
    border-radius: 0 0 3px 3px;
}
.tracking h2{
    margin: 0;
    padding: 0 11px;
    font-size: 14px;
    font-weight: 600;
    line-height: 43px;
    border-bottom: 1px solid #e3e6e8;
}
.toolbar{
    display: flex;
    align-items: center;
    gap: 14px;
    padding: 11px 11px 14px;
}
.badge{
    display: flex;
    align-items: center;
    gap: 4px;
    height: 22px;
    padding: 0 10px;
    border-radius: 11px;
    font-size: 12px;
    font-weight: 600;
    color: #fff;
}
.red{
    background-color: #c92a2a;
}
.blue{
    background-color: #1a62ab;
}
.green{
    background-color: #e6f3ea;
    color: #3a8f4d;
}
.pinIcon{
    width: 9px;
    height: 12px;
    fill: #fff;
}
.heatmap{
    display: flex;
    align-items: center;
    gap: 6px;
    margin-left: auto;
    font-size: 12px;
}
.switch{
    appearance: none;
    width: 36px;
    height: 17px;
    margin: 0 4px 0 0;
    border: 1px solid #dcdde1;
    border-radius: 9px;
    background: radial-gradient(circle at 8px 8px, #fff 5px, #e6e7eb 6px);
}
.layers{
    width: 12px;
    height: 12px;
}

/* map */
.map{
    position: relative;
    margin: 0 11px 10px;
    border-radius: 5px;
    overflow: hidden;
    font-family: Roboto, "Liberation Sans", sans-serif;
}
.mapArt{
    display: block;
    width: 100%;
}
.tile{
    overflow: visible;
}
.land{
    fill: #f5f0e6;
}
.forest{
    fill: #d3f8e2;
}
.park{
    fill: #b5edcb;
}
.city{
    fill: #f5f7f8;
}
.airport{
    fill: #d5def6;
}
.relief{
    mix-blend-mode: multiply;
    opacity: 0.16;
}
.stream{
    fill: none;
    stroke: #92dcf0;
    stroke-width: 3;
    stroke-linejoin: round;
}
.wide{
    stroke-width: 8;
}
.river{
    stroke-width: 16;
}
.lake{
    fill: #8ad9f2;
}
.indus{
    fill: none;
    stroke: #62bccd;
    stroke-width: 5;
    stroke-dasharray: 9 2;
}
.road{
    fill: none;
    stroke: #c0c4ca;
    stroke-width: 3;
    stroke-linejoin: round;
}
.street{
    fill: none;
    stroke: #d0d7e4;
}
.highway{
    fill: none;
    stroke: #a0acca;
    stroke-width: 6;
    stroke-linejoin: round;
}
.highway .thin{
    stroke-width: 4;
}
.motorway{
    fill: none;
    stroke: #9ca9c8;
    stroke-width: 3;
    stroke-linejoin: round;
}
.trail{
    fill: none;
    stroke: #a9b0a8;
    stroke-dasharray: 2 2;
}
.border{
    fill: none;
    stroke: #46524e;
    stroke-width: 1;
    stroke-dasharray: 6 4;
}
.shield{
    stroke: #fff;
    stroke-width: 1;
    stroke-linejoin: round;
}
.blueShield{
    fill: #4179c9;
}
.greenShield{
    fill: #62a044;
}
.shieldText{
    fill: #fff;
    font-size: 9px;
    font-weight: 600;
    text-anchor: middle;
}
.riverName{
    fill: #258fa3;
    font-size: 12px;
}
.places{
    font-family: Roboto, "DejaVu Sans", sans-serif;
    font-size: 11px;
    fill: #4a4d50;
    stroke: rgba(255, 255, 255, 0.8);
    stroke-width: 2px;
    paint-order: stroke;
    text-anchor: middle;
}
.major{
    font-size: 17px;
    font-weight: 500;
    fill: #3c4043;
}
.marker text{
    font-family: Inter, sans-serif;
    font-size: 12px;
    font-weight: 700;
    fill: #fff;
    text-anchor: middle;
}
.redMarker{
    fill: #c9252b;
}
.blueMarker{
    fill: #1a62ab;
}
.cluster{
    stroke: #fff;
    stroke-width: 2;
}
.dot{
    fill: #fff;
}
.ring{
    fill: none;
    stroke: #fff;
    stroke-width: 2;
}
.marker .pinLetter{
    font-size: 8px;
    fill: #777;
}
.controls{
    position: absolute;
    top: 9px;
    right: 9px;
    display: flex;
    flex-direction: column;
    align-items: flex-end;
    gap: 17px;
}
.mapType{
    display: flex;
    font-size: 16px;
}
.mapType, .fullscreen{
    border-radius: 2px;
    background-color: #fff;
    box-shadow: 0 1px 3px rgba(0, 0, 0, 0.25);
}
.mapType button{
    height: 35px;
    padding: 0 14px;
    background: none;
    color: #5a5a5a;
}
.mapType .active{
    color: #000;
    font-weight: 500;
    border-right: 1px solid #ececec;
}
.fullscreen{
    width: 35px;
    height: 35px;
}
.fullscreen svg{
    display: block;
    width: 17px;
    margin: auto;
    fill: #666;
}
.google{
    position: absolute;
    left: 9px;
    bottom: 3px;
    font-family: Lato, sans-serif;
    font-size: 16px;
    line-height: 20px;
    text-decoration: none;
    -webkit-text-stroke: 2px #fff;
    paint-order: stroke;
}
.gBlue{
    color: #4285f4;
}
.gRed{
    color: #ea4335;
}
.gYellow{
    color: #fbbc04;
}
.gGreen{
    color: #34a853;
}
.camera{
    position: absolute;
    right: 9px;
    bottom: 21px;
    width: 35px;
    height: 35px;
    border-radius: 50%;
    background-color: #fff;
}
.camera svg{
    display: block;
    width: 21px;
    margin: auto;
    fill: #666;
}
.credits{
    position: absolute;
    right: 0;
    bottom: 0;
    display: flex;
    gap: 10px;
    padding: 0 3px;
    font-size: 9px;
    line-height: 12px;
    color: #111;
}
.credits button{
    background: none;
}
.credits a{
    color: #111;
    text-decoration: none;
}

.scrollbar{
    display: flex;
    align-items: flex-end;
    width: 14px;
    padding: 0 3px 18px;
}
.thumb{
    width: 8px;
    height: 215px;
    border-radius: 4px;
    background-color: #8b8b8b;
}
.help{
    position: absolute;
    right: 31px;
    bottom: 17px;
    width: 48px;
    height: 48px;
    border-radius: 50%;
    background-color: #0338a8;
    box-shadow: 0 2px 4px rgba(0, 0, 0, 0.2);
}
.help svg{
    display: block;
    width: 21px;
    margin: auto;
    fill: none;
    stroke: #fff;
    stroke-width: 2;
    stroke-linecap: round;
}
```
